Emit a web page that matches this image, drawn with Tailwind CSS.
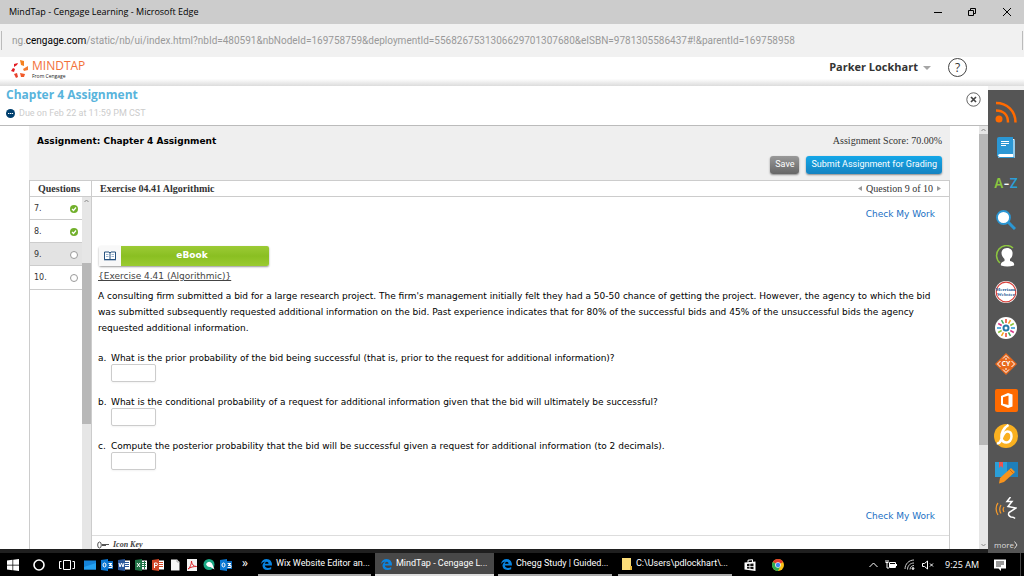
<!DOCTYPE html>
<html lang="en" class="h-full">

<head>
    <meta charset="UTF-8" />
    <meta name="viewport" content="width=device-width, initial-scale=1.0" />
    <title>MindTap - Cengage Learning</title>
    <script src="https://cdn.jsdelivr.net/npm/@tailwindcss/browser@4"></script>
</head>

<body class="flex h-screen flex-col overflow-hidden bg-white font-['Open_Sans','Noto_Sans',sans-serif] text-black">

  <!-- window title -->
  <div class="flex h-6 shrink-0 items-center justify-between bg-[#ccc] pl-[9px]">
    <span class="text-[9px]">MindTap - Cengage Learning - Microsoft Edge</span>
    <div class="flex h-full">
      <button aria-label="Minimize" class="flex w-[34px] items-center justify-center"><svg class="size-[10px]" viewBox="0 0 10 10" stroke="#000"><path d="M1 5.500h8"/></svg></button>
      <button aria-label="Restore" class="flex w-[34px] items-center justify-center"><svg class="size-[10px]" viewBox="0 0 10 10" fill="none" stroke="#000"><path d="M1.500 3.500h5v5h-5zM3.500 3V1.500h5v5H7"/></svg></button>
      <button aria-label="Close" class="flex w-[35px] items-center justify-center"><svg class="size-[10px]" viewBox="0 0 10 10" stroke="#000"><path d="M1 1l8 8M9 1l-8 8"/></svg></button>
    </div>
  </div>

  <!-- address bar -->
  <div class="flex h-[33px] shrink-0 items-center bg-[#f1f1f1] px-px">
    <div class="flex h-[19px] flex-1 items-center border-x border-[#bbb] pl-[10px] font-['Roboto',sans-serif] text-[10px] text-[#999]">
      <span>ng.<span class="text-black">cengage.com</span>/static/nb/ui/index.html?nbId=480591&amp;nbNodeId=169758759&amp;deploymentId=5568267531306629701307680&amp;eISBN=9781305586437#!&amp;parentId=169758958</span>
    </div>
  </div>

  <!-- MindTap header -->
  <header class="flex h-[29px] shrink-0 items-start justify-between bg-linear-to-b from-white from-75% to-[#dcdcdc] pr-[57px] pl-[11px]">
    <a href="#" class="flex items-start gap-[3px] pt-[3px]">
      <svg class="size-[18px]" viewBox="0 0 18 18">
        <path fill="#f58220" d="M9 0l4 1v5l-3-1z"/>
        <path fill="#e31b23" d="M3 4l4-1-1 2-3 2zM0 11l2-3 2 1-1 3z"/>
        <path fill="#f47b30" d="M12 9l5-3v4l-4 1z"/>
        <path fill="#e8432e" d="M3 14l3-1 1 4-2 1z"/>
        <path fill="#f15a29" d="M9 13l5 1-1 3-3 0z"/>
      </svg>
      <span class="flex flex-col">
        <span class="text-[12px] leading-[12px] text-[#f2703a]">MINDTAP</span>
        <span class="text-[5px] leading-[8px] text-[#222]">From Cengage</span>
      </span>
    </a>
    <div class="flex items-center gap-[17px] pt-px">
      <button class="flex items-center gap-[5px] text-[11px] font-bold text-[#333]">Parker Lockhart
        <svg class="h-1 w-2" viewBox="0 0 8 4"><path d="M0 0h8L4 4z" fill="#a5a5a5"/></svg>
      </button>
      <button aria-label="Help" class="flex size-[19px] items-center justify-center rounded-full border border-[#444] text-[12px] text-[#333]">?</button>
    </div>
  </header>

  <div class="flex min-h-0 flex-1">
    <main class="flex min-w-0 flex-1 flex-col border-b-4 border-[#1f1f1f]">

      <div class="flex h-10 shrink-0 items-start justify-between border-b border-[#bbb] pr-[7px] pl-1.5">
        <div>
          <h1 class="text-[12px] leading-[18px] font-bold text-[#58b4dc]">Chapter 4 Assignment</h1>
          <p class="flex items-center gap-1 font-['Roboto',sans-serif] text-[9px] leading-[18px] text-[#ccc]">
            <svg class="size-[9px]" viewBox="0 0 9 9"><circle cx="4.500" cy="4.500" r="4.500" fill="#003f6e"/><path d="M2 4.500h1.300M3.900 4.500h1.300M5.800 4.500h1.300" stroke="#fff" stroke-width="1.200"/></svg>
            Due on Feb 22 at 11:59 PM CST
          </p>
        </div>
        <button aria-label="Close assignment" class="pt-1.5"><svg class="size-[15px]" viewBox="0 0 15 15" fill="none" stroke="#555"><circle cx="7.500" cy="7.500" r="6.700" stroke-width=".9"/><path d="M5 5l5 5M10 5l-5 5" stroke="#444" stroke-width="1.700"/></svg></button>
      </div>

      <div class="flex min-h-0 flex-1 pl-[29px]">
        <div class="mr-[29px] flex min-w-0 flex-1 flex-col">
          <div class="flex h-[54px] shrink-0 justify-between bg-[#efefef] pr-2 pl-2">
            <h2 class="pt-2 font-['DejaVu_Sans',sans-serif] text-[9px] leading-[14px] font-bold">Assignment: Chapter 4 Assignment</h2>
            <div class="flex flex-col items-end gap-2 pt-2">
              <p class="font-['Liberation_Serif',serif] text-[10px] leading-[14px] text-[#333]">Assignment Score: 70.00%</p>
              <div class="flex gap-[7px] font-['Roboto',sans-serif] text-[9px] text-white">
                <button class="h-[18px] rounded-[3px] bg-linear-to-b from-[#999] to-[#666] px-[5px] shadow-[0_1px_2px_#888]">Save</button>
                <button class="h-[18px] rounded-[3px] bg-linear-to-b from-[#14a7e8] to-[#1583c1] px-[5px] shadow-[0_1px_2px_#888]">Submit Assignment for Grading</button>
              </div>
            </div>
          </div>

          <div class="flex min-h-0 flex-1 border-x border-t border-[#ccc]">
            <!-- question list -->
            <nav class="flex w-[62px] shrink-0 flex-col border-r border-[#ccc] font-['DejaVu_Sans',sans-serif] text-[8px] text-[#333]">
              <h3 class="h-4 shrink-0 border-b border-[#ccc] pl-2 font-['Liberation_Serif',serif] text-[10px] leading-[15px] font-bold">Questions</h3>
              <div class="flex min-h-0 flex-1">
                <ul class="flex-1">
                  <li class="border-b border-[#ccc]"><a href="#" class="flex h-[22px] items-center justify-between px-1 pt-px">7. <svg class="size-2" viewBox="0 0 8 8"><circle cx="4" cy="4" r="4" fill="#72b02c"/><path d="M2 4l1.500 1.500L6 2.500" fill="none" stroke="#fff" stroke-width="1.200"/></svg></a></li>
                  <li class="border-b border-[#ccc]"><a href="#" class="flex h-[22px] items-center justify-between px-1 pt-px">8. <svg class="size-2" viewBox="0 0 8 8"><circle cx="4" cy="4" r="4" fill="#72b02c"/><path d="M2 4l1.500 1.500L6 2.500" fill="none" stroke="#fff" stroke-width="1.200"/></svg></a></li>
                  <li class="border-b border-[#ccc] bg-[#e3e3e3]"><a href="#" class="flex h-[22px] items-center justify-between px-1 pt-px">9. <svg class="size-2" viewBox="0 0 8 8"><circle cx="4" cy="4" r="3.500" fill="#fff" stroke="#999"/></svg></a></li>
                  <li class="border-b border-[#ccc]"><a href="#" class="flex h-[23px] items-center justify-between px-1 pt-px">10. <svg class="size-2" viewBox="0 0 8 8"><circle cx="4" cy="4" r="3.500" fill="#fff" stroke="#999"/></svg></a></li>
                </ul>
                <div class="flex w-[9px] flex-col items-center bg-[#e6e6e6]">
                  <svg class="mt-0.5 mb-[60px] h-1 w-[5px] shrink-0" viewBox="0 0 5 4" fill="none" stroke="#888"><path d="M.5 3l2-2 2 2"/></svg>
                  <div class="h-[161px] w-full bg-[#b8b8b8]"></div>
                </div>
              </div>
            </nav>

            <!-- current question -->
            <section class="flex min-w-0 flex-1 flex-col overflow-hidden font-['DejaVu_Sans',sans-serif] text-[9px]">
              <div class="flex h-4 shrink-0 items-center justify-between border-b border-[#ccc] pr-2 pl-2 font-['Liberation_Serif',serif] text-[10px] leading-[15px] text-[#333]">
                <h3 class="font-bold">Exercise 04.41 Algorithmic</h3>
                <div class="flex items-center gap-1">
                  <button aria-label="Previous question"><svg class="block h-[5px] w-1" viewBox="0 0 4 5"><path d="M4 0v5L0 2.500z" fill="#999"/></svg></button>
                  Question 9 of 10
                  <button aria-label="Next question"><svg class="block h-[5px] w-1" viewBox="0 0 4 5"><path d="M0 0v5l4-2.500z" fill="#999"/></svg></button>
                </div>
              </div>

              <div class="shrink-0 pt-[9px] pr-[14px] pl-1.5">
                <div class="text-right"><a href="#" class="block leading-4 text-[#1a6fc4]">Check My Work</a></div>
                <button class="mt-6 ml-px flex h-5 w-[170px] rounded-[2px] bg-linear-to-b from-[#9ccb35] via-[#8abf22] to-[#9acb30] font-bold text-white shadow-[0_1px_2px_#999]">
                  <span class="flex h-full w-[22px] items-center justify-center bg-[#f8f8f8]">
                    <svg class="h-[10px] w-3" viewBox="0 0 12 10"><path d="M.5 1h4.500l1 1 1-1h4.500v7.500h-11z" fill="#fff" stroke="#27527f"/><path d="M6 2v6.500" stroke="#27527f"/><path d="M2 3.500h2.500M2 5.500h2.500M7.500 3.500H10M7.500 5.500H10" stroke="#9ab5d0"/><path d="M0 8.800h12" stroke="#27527f"/></svg>
                  </span>
                  <span class="flex-1 self-center pr-1.5">eBook</span>
                </button>
                <a href="#" class="mt-0.5 block leading-4 text-[#444] underline">{Exercise 4.41 (Algorithmic)}</a>
                <p class="mt-1 leading-4">A consulting firm submitted a bid for a large research project. The firm's management initially felt they had a 50-50 chance of getting the project. However, the agency to which the bid was submitted subsequently requested additional information on the bid. Past experience indicates that for 80% of the successful bids and 45% of the unsuccessful bids the agency requested additional information.</p>

                <ol class="mt-[17px] space-y-[15px] leading-[11px]">
                  <li class="flex"><span class="w-[13px]">a.</span>
                    <div><label for="answer-a" class="block">What is the prior probability of the bid being successful (that is, prior to the request for additional information)?</label>
                      <input id="answer-a" type="text" class="block h-[18px] w-[45px] rounded-[2px] border border-[#ccc] px-1 shadow-xs" /></div></li>
                  <li class="flex"><span class="w-[13px]">b.</span>
                    <div><label for="answer-b" class="block">What is the conditional probability of a request for additional information given that the bid will ultimately be successful?</label>
                      <input id="answer-b" type="text" class="block h-[18px] w-[45px] rounded-[2px] border border-[#ccc] px-1 shadow-xs" /></div></li>
                  <li class="flex"><span class="w-[13px]">c.</span>
                    <div><label for="answer-c" class="block">Compute the posterior probability that the bid will be successful given a request for additional information (to 2 decimals).</label>
                      <input id="answer-c" type="text" class="block h-[18px] w-[45px] rounded-[2px] border border-[#ccc] px-1 shadow-xs" /></div></li>
                </ol>
                <div class="mt-[38px] text-right"><a href="#" class="block leading-4 text-[#1a6fc4]">Check My Work</a></div>
              </div>
              <div class="mt-[11px] flex shrink-0 items-center gap-1 border-t border-[#ddd] pt-0.5 pl-[5px] font-['Liberation_Serif',serif] text-[8px] leading-[14px] font-bold text-[#444] italic">
                <svg class="h-2 w-3" viewBox="0 0 12 8" fill="none" stroke="#555"><ellipse cx="2.500" cy="4" rx="1.800" ry="3"/><path d="M5 3.500h7M5 4.500h4"/></svg>Icon Key
              </div>
            </section>
          </div>
        </div>

        <!-- page scrollbar -->
        <div class="flex w-[9px] flex-col items-center bg-[#e6e6e6]">
          <svg class="mt-0.5 mb-0.5 h-1 w-[5px] shrink-0" viewBox="0 0 5 4" fill="none" stroke="#888"><path d="M.5 3l2-2 2 2"/></svg>
          <div class="h-[311px] w-full shrink-0 bg-[#b8b8b8]"></div>
          <svg class="mt-auto mb-0.5 h-1 w-[5px] shrink-0" viewBox="0 0 5 4" fill="none" stroke="#888"><path d="M.5 1l2 2 2-2"/></svg>
        </div>
      </div>
    </main>

    <!-- app dock -->
    <aside class="flex w-9 shrink-0 flex-col items-center border-t-4 border-[#f3f3f3] bg-[#555] pt-1">
      <button aria-label="RSS" class="flex h-9 items-center"><svg class="size-[22px]" viewBox="0 0 22 22" fill="none" stroke="#ff6a00" stroke-width="2.500"><circle cx="4" cy="18" r="3.500" fill="#ff6a00" stroke="none"/><path d="M1 9.500c7 0 12 4 12 12M1 2c11 0 19.500 8 19.500 19.500"/></svg></button>
      <button aria-label="Reader" class="flex h-9 items-center"><svg class="h-[22px] w-[18px]" viewBox="0 0 18 22"><rect x="1" y="2" width="17" height="19" rx="1.500" fill="#fff"/><path d="M0 2Q0 0 2 0h14v17H3q-2 0-2 2H0z" fill="#2b97d4"/><path d="M1 19q0 1.500 2 1.500h14V3" fill="none" stroke="#2b97d4"/><path d="M4 4.500h8M4 6.500h8M4 8.500h5" stroke="#fff"/></svg></button>
      <button aria-label="Glossary" class="flex h-9 items-center font-['Inter',sans-serif] text-[13px] font-semibold"><span class="text-[#8cc63f]">A</span><span class="text-white">-</span><span class="text-[#2b9fd8]">Z</span></button>
      <button aria-label="Search" class="flex h-9 items-center"><svg class="size-5" viewBox="0 0 20 20"><path d="M12 12l7 7" stroke="#2b97d4" stroke-width="3"/><circle cx="7.500" cy="7.500" r="6.500" fill="#fff" stroke="#2b97d4" stroke-width="1.800"/></svg></button>
      <button aria-label="Tutor" class="flex h-9 items-center"><svg class="size-[22px]" viewBox="0 0 22 22"><path d="M5 18A9.500 9.500 0 1 1 18 3" fill="none" stroke="#8cc63f" stroke-width="1.500"/><path d="M12 3c4 0 6 3 5.500 6 0 2-1 4-2.500 5v2q5 1 4 4.500-7 2-13 0Q5 17.500 9.500 16v-2C7.500 12 6.500 10 6.500 8S8 3 12 3z" fill="#fff"/></svg></button>
      <button aria-label="Merriam-Webster" class="relative flex h-9 items-center"><svg class="size-[22px]" viewBox="0 0 22 22"><circle cx="11" cy="11" r="11" fill="#fff"/><circle cx="11" cy="11" r="9.800" fill="none" stroke="#d8403a" stroke-width="1.200"/></svg><span class="absolute inset-0 flex flex-col items-center justify-center font-['Liberation_Serif',serif] text-[5px] leading-[5px] font-bold text-[#1f5c96]"><span>Merriam-</span><span>Webster</span></span></button>
      <button aria-label="College success" class="flex h-9 items-center"><svg class="size-[22px]" viewBox="0 0 22 22" fill="none"><circle cx="11" cy="11" r="11" fill="#fff"/><g stroke-width="1.500"><path d="M11 2v4M11 16v4" stroke="#e8432e"/><path d="M15.500 3.200l-2 3.500M6.500 18.800l2-3.500" stroke="#f7a11a"/><path d="M18.800 6.500l-3.500 2M3.200 15.500l3.500-2" stroke="#8cc63f"/><path d="M20 11h-4M2 11h4" stroke="#2b97d4"/><path d="M18.800 15.500l-3.500-2M3.200 6.500l3.500 2" stroke="#d63b8a"/><path d="M15.500 18.800l-2-3.500M6.500 3.200l2 3.500" stroke="#3aaa5a"/></g><circle cx="11" cy="11" r="2.500" stroke="#2679a8" stroke-width="2"/></svg></button>
      <button aria-label="CourseYard" class="relative flex h-9 items-center"><svg class="size-[22px]" viewBox="0 0 22 22"><path d="M11 0l11 11-11 11L0 11z" fill="#e8681c"/><path d="M11 2.500l3 3M11 2.500l-3 3M11 5v2M11 19.500l3-3M11 19.500l-3-3M11 17v-2M2.500 11l3-3M2.500 11l3 3M19.500 11l-3-3M19.500 11l-3 3" fill="none" stroke="#fff"/></svg><span class="absolute inset-0 flex items-center justify-center text-[7px] font-bold text-white">CY</span></button>
      <button aria-label="Office" class="flex h-9 items-center"><svg class="size-[23px]" viewBox="0 0 23 23"><rect width="23" height="23" rx="2" fill="#ff6a00"/><path fill-rule="evenodd" d="M6 7l7-3 4.500 1.500v12L13 19l-7-3zM8 8.200v6.600l5.500 1.200V6.500z" fill="#fff"/></svg></button>
      <button aria-label="Six" class="flex h-9 items-center"><svg class="size-6" viewBox="0 0 24 24" fill="none"><circle cx="12" cy="12" r="12" fill="#f9b020"/><path d="M14.500 1C9 4 7 10 7.500 14c.5 3 2.500 4.500 5 4.500s5-2.500 5-6-2-5-4-5c-4 0-5 5-6.500 8.500Q5.500 20 3 19" stroke="#fff" stroke-width="2.500"/></svg></button>
      <button aria-label="Notebook" class="flex h-9 items-center"><svg class="size-[23px]" viewBox="0 0 23 23"><path d="M0 1h12v15H0z" fill="#2b9fd8"/><path d="M12 1h11v15H12z" fill="#1f7fba"/><path d="M4 1h4v6L6 5 4 7z" fill="#ef5350"/><path d="M5 17L16 7l4 4L9 21l-5 1.500z" fill="#f7941d"/><path d="M14.500 8.500l4 4" stroke="#c96a10"/></svg></button>
      <button aria-label="Read aloud" class="flex h-9 items-center"><svg class="size-[22px]" viewBox="0 0 22 22" fill="none"><g stroke="#f0982d" stroke-width="1.300"><path d="M3 6c-2.500 3-2.500 8 0 12M6 8c-1.500 2.500-1.500 6 0 8.500M9 10c-1 1.500-1 3.500 0 5"/></g><path d="M15.500 0L12 4.500l5 0L13 9.500l8 1.500-7 4.500q-1.500 3 2 4.500 3 0 4 1.500" stroke="#fff" stroke-width="1.500"/></svg></button>
      <button class="mt-3 flex items-center text-[8px] leading-[14px] text-[#ddd]">more<svg class="h-2 w-1" viewBox="0 0 4 8" fill="none" stroke="#ddd"><path d="M.5.5L3 4 .5 7.500"/></svg></button>
    </aside>
  </div>

  <!-- taskbar -->
  <footer class="flex h-[23px] shrink-0 items-stretch bg-black text-[9px] text-white">
    <div class="flex items-center gap-[14px] pl-[7px]">
      <button aria-label="Start"><svg class="block size-3" viewBox="0 0 12 12" fill="#fff"><path d="M0 1.500L5.500.8v4.900H0zM6.200.7L12 0v5.700H6.200zM0 6.400h5.500v4.900L0 10.500zM6.200 6.400H12V12l-5.800-.7z"/></svg></button>
      <button aria-label="Cortana"><svg class="block size-3" viewBox="0 0 12 12"><circle cx="6" cy="6" r="5" fill="none" stroke="#fff" stroke-width="1.600"/></svg></button>
      <button aria-label="Task view"><svg class="block h-3 w-4" viewBox="0 0 16 12" fill="none" stroke="#fff"><path d="M4.500 1.500h7v9h-7zM2.500 2.500h-2v7h2M13.500 2.500h2v7h-2"/></svg></button>
    </div>
    <div class="flex items-center gap-[5px] pl-[9px]">
      <button aria-label="Desktop"><svg class="block size-3" viewBox="0 0 12 12"><path d="M0 1.500h12v9H0z" fill="#1583d8"/><path d="M0 8l12-4v6.500H0z" fill="#25a0f0"/></svg></button>
      <button aria-label="Outlook"><svg class="block size-3" viewBox="0 0 12 12"><path d="M5 2h7v8H5z" fill="#0a66b8"/><path d="M7.500 4.500h3.500L8 6.500h3v2H7.500" stroke="#fff" fill="none"/><path d="M0 1l7-1v12l-7-1z" fill="#0a78d4"/><ellipse cx="3.500" cy="6" rx="1.500" ry="2" fill="none" stroke="#fff"/></svg></button>
      <button aria-label="Word"><svg class="block size-3" viewBox="0 0 12 12"><path d="M6 1.500h6v9H6z" fill="#fff"/><path d="M7 3.500h4M7 5.500h4M7 7.500h4" stroke="#2b579a"/><path d="M0 1l7-1v12l-7-1z" fill="#2b579a"/><path d="M1 4l1 4 1.500-4L5 8l1-4" stroke="#fff" fill="none"/></svg></button>
      <button aria-label="Excel"><svg class="block size-3" viewBox="0 0 12 12"><path d="M6 1.500h6v9H6z" fill="#fff"/><path d="M7 3.500h4M7 5.500h4M7 7.500h4M9.500 2v8" stroke="#217346"/><path d="M0 1l7-1v12l-7-1z" fill="#217346"/><path d="M2 4l3 4M5 4L2 8" stroke="#fff" fill="none"/></svg></button>
      <button aria-label="PowerPoint"><svg class="block size-3" viewBox="0 0 12 12"><path d="M6 1.500h6v9H6z" fill="#fff"/><path d="M7 3.500h4M7 5.500h4M7 7.500h4" stroke="#d24726"/><path d="M0 1l7-1v12l-7-1z" fill="#d24726"/><path d="M2.500 9V4H4q1.500 0 1.500 1.300T4 6.600H2.500" stroke="#fff" fill="none"/></svg></button>
      <button aria-label="Document"><svg class="block size-3" viewBox="0 0 12 12"><path d="M2 .5h6l2.500 2.500v8.500H2z" fill="#f4f4f4"/><path d="M8 .5V3h2.500" stroke="#999" stroke-width=".7" fill="none"/></svg></button>
      <button aria-label="Acrobat"><svg class="block size-3" viewBox="0 0 12 12"><path d="M1 0h10v12H1z" fill="#f4f4f4"/><path d="M2 10c2-1 3.500-5 3.500-8 0 3 2 5.500 5 5.500-3 0-6 .5-8.500 2.500" stroke="#d9252a" fill="none"/></svg></button>
      <button aria-label="Chat"><svg class="block size-3" viewBox="0 0 12 12"><circle cx="6" cy="5.500" r="5.500" fill="#1ba784"/><path d="M3 5q3-4 6-.5l2.500 6-4-2.500Q4 8.500 3 5z" fill="#fff"/></svg></button>
      <button aria-label="Outlook mail"><svg class="block size-3" viewBox="0 0 12 12"><path d="M5 2h7v8H5z" fill="#0a66b8"/><path d="M7.500 4.500h3.500L8 6.500h3v2H7.500" stroke="#fff" fill="none"/><path d="M0 1l7-1v12l-7-1z" fill="#0a78d4"/><ellipse cx="3.500" cy="6" rx="1.500" ry="2" fill="none" stroke="#fff"/></svg></button>
    </div>
    <button class="w-[26px] pb-1 text-center text-[12px] leading-[18px]">»</button>

    <div class="flex gap-1 font-['Roboto',sans-serif]">
      <button class="flex w-[113px] items-center gap-1 border-b-2 border-[#aaa] px-[3px] pt-px whitespace-nowrap"><svg class="size-[11px] shrink-0" viewBox="0 0 11 11"><path d="M0 5Q1 0 5.700 0 11 .2 11 6.500H3.800q.3 2.400 3.200 2.400 1.800 0 3.200-.9v2.300Q8.700 11 6.500 11 1.300 11 1.500 6 2 3.500 4.500 2.500 1.500 2.700 0 5zM3.900 4.700h3.700Q7.500 2.700 5.800 2.700 4.200 2.800 3.900 4.700z" fill="#0a84e0"/></svg>Wix Website Editor an...</button>
      <button class="flex w-[119px] items-center gap-1 border-b-2 border-[#ddd] bg-[#484848] px-1.5 pt-px whitespace-nowrap"><svg class="size-[11px] shrink-0" viewBox="0 0 11 11"><path d="M0 5Q1 0 5.700 0 11 .2 11 6.500H3.800q.3 2.400 3.200 2.400 1.800 0 3.200-.9v2.300Q8.700 11 6.500 11 1.300 11 1.500 6 2 3.500 4.500 2.500 1.500 2.700 0 5zM3.900 4.700h3.700Q7.500 2.700 5.800 2.700 4.200 2.800 3.900 4.700z" fill="#0a84e0"/></svg>MindTap - Cengage L...</button>
      <button class="flex w-[114px] items-center gap-1 border-b-2 border-[#aaa] px-[3px] pt-px whitespace-nowrap"><svg class="size-[11px] shrink-0" viewBox="0 0 11 11"><path d="M0 5Q1 0 5.700 0 11 .2 11 6.500H3.800q.3 2.400 3.200 2.400 1.800 0 3.200-.9v2.300Q8.700 11 6.500 11 1.300 11 1.500 6 2 3.500 4.500 2.500 1.500 2.700 0 5zM3.900 4.700h3.700Q7.500 2.700 5.800 2.700 4.200 2.800 3.900 4.700z" fill="#0a84e0"/></svg>Chegg Study | Guided...</button>
      <button class="ml-0.5 flex w-[114px] items-center gap-1 border-b-2 border-[#aaa] px-1 pt-px whitespace-nowrap"><svg class="h-3 w-[10px] shrink-0" viewBox="0 0 10 12"><path d="M0 0h9v8l1 1v3H0z" fill="#fbdc78"/><path d="M8 8h2v4H8z" fill="#e8b93c"/></svg>C:\Users\pdlockhart\...</button>
    </div>
    <div class="flex items-center gap-4 pl-3">
      <button aria-label="Store"><svg class="block size-3" viewBox="0 0 12 12"><path d="M.5 3.500l11-1v9.500l-11-1.500z" fill="#fff"/><path d="M4 3.500V1.200L8.500.7v2.500" fill="none" stroke="#fff"/><path d="M3 5l2.500-.2v2.200H3zM6.300 4.700L9.500 4.500V7H6.300zM3 7.700h2.500v2L3 9.500zM6.300 7.700h3.200v2.500l-3.200-.4z" fill="#111"/></svg></button>
      <button aria-label="Chrome"><svg class="block size-3" viewBox="0 0 12 12"><circle cx="6" cy="6" r="6" fill="#fbc116"/><path d="M6 6L.8 3A6 6 0 0 1 11.200 3z" fill="#e33b2e"/><path d="M6 6L.8 3A6 6 0 0 0 6 12l2.500-5z" fill="#2da94f"/><circle cx="6" cy="6" r="2.800" fill="#fff"/><circle cx="6" cy="6" r="2.200" fill="#4285f4"/></svg></button>
    </div>
    <div class="mr-[3px] ml-auto flex items-center gap-[7px] border-r border-[#444] pr-[14px]">
      <svg class="h-[6px] w-[9px]" viewBox="0 0 9 6" fill="none" stroke="#fff"><path d="M.5 5l4-4 4 4"/></svg>
      <svg class="h-[10px] w-3" viewBox="0 0 12 10" fill="none" stroke="#fff"><path d="M4.500 2.500h6v5h-6z"/><path d="M5 4h5v3H5z" fill="#fff" stroke="none"/><path d="M11.500 4v2M1 0v2M3 0v2M.5 2.500h3M2 3v5h2"/></svg>
      <svg class="size-[11px]" viewBox="0 0 11 11" fill="none" stroke="#ccc"><path d="M1 10C1 5 5 1 10 1M3.500 10.500C3.500 6.500 6.500 4 10 4M6 10.500C6 8 8 6.500 10 6.500"/><circle cx="9" cy="9.500" r="1" fill="#fff"/></svg>
      <svg class="h-[10px] w-3" viewBox="0 0 12 10" fill="none" stroke="#fff"><path d="M.5 3.500H2.500L5.500 1v8L2.500 6.500h-2zM8 3.500l3 3M11 3.500l-3 3"/></svg>
      <span class="pl-1">9:25 AM</span>
      <button aria-label="Notifications" class="pl-1"><svg class="ml-1 block size-3" viewBox="0 0 12 12"><path d="M0 .5h12v9H7v2.500L4.500 9.500H0z" fill="#fff"/><path d="M2 3h8M2 5h8M2 7h5" stroke="#000" stroke-width=".8"/></svg></button>
    </div>
  </footer>
</body>

</html>
